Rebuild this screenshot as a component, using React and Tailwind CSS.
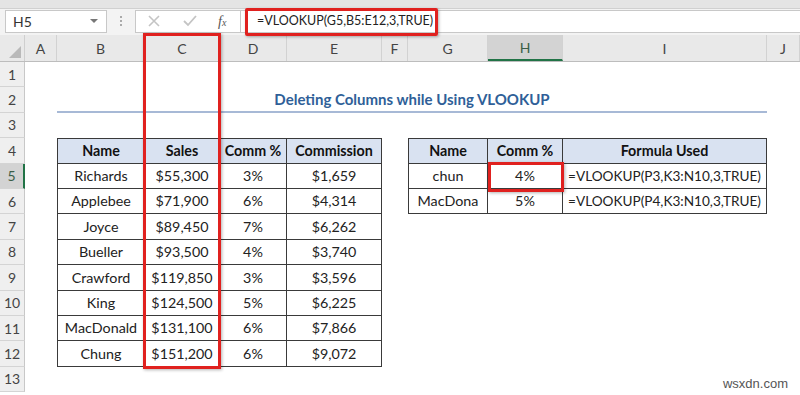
const COLS = [
  { key: "A", w: "w-[32px]" },
  { key: "B", w: "w-[88px]" },
  { key: "C", w: "w-[75px]" },
  { key: "D", w: "w-[67px]" },
  { key: "E", w: "w-[95px]" },
  { key: "F", w: "w-[26px]" },
  { key: "G", w: "w-[80px]" },
  { key: "H", w: "w-[75px]" },
  { key: "I", w: "w-[204px]" },
  { key: "J", w: "w-[33px]" },
];

const sales = [
  ["Richards", "$55,300", "3%", "$1,659"],
  ["Applebee", "$71,900", "6%", "$4,314"],
  ["Joyce", "$89,450", "7%", "$6,262"],
  ["Bueller", "$93,500", "4%", "$3,740"],
  ["Crawford", "$119,850", "3%", "$3,596"],
  ["King", "$124,500", "5%", "$6,225"],
  ["MacDonald", "$131,100", "6%", "$7,866"],
  ["Chung", "$151,200", "6%", "$9,072"],
];

const lookup = [
  ["chun", "4%", "=VLOOKUP(P3,K3:N10,3,TRUE)"],
  ["MacDona", "5%", "=VLOOKUP(P4,K3:N10,3,TRUE)"],
];

function cellContent(row, col) {
  // left table B4:E12, right table G4:I6
  const left = ["B", "C", "D", "E"];
  const right = ["G", "H", "I"];
  if (row === 4 && left.includes(col)) {
    return { text: ["Name", "Sales", "Comm %", "Commission"][left.indexOf(col)], head: true };
  }
  if (row >= 5 && row <= 12 && left.includes(col)) {
    return { text: sales[row - 5][left.indexOf(col)] };
  }
  if (row === 4 && right.includes(col)) {
    return { text: ["Name", "Comm %", "Formula Used"][right.indexOf(col)], head: true };
  }
  if ((row === 5 || row === 6) && right.includes(col)) {
    return { text: lookup[row - 5][right.indexOf(col)], small: col === "I" };
  }
  return null;
}

function Cell({ row, col, w }) {
  const c = cellContent(row, col);
  if (!c) return <div className={`${w} shrink-0`} />;
  const firstCol = col === "B" || col === "G";
  return (
    <div
      className={`${w} shrink-0 flex items-center justify-center whitespace-nowrap border-[#3a3a3a] border-b border-r ${
        row === 4 ? "border-t" : ""
      } ${firstCol ? "border-l" : ""} ${c.head ? "bg-[#d9e2f1] font-bold text-[#111]" : "text-[#222]"} ${
        c.small ? "text-[13.6px]" : ""
      }`}
    >
      {c.text}
    </div>
  );
}

export default function App() {
  const rows = Array.from({ length: 13 }, (_, i) => i + 1);

  return (
    <div
      className="relative w-[800px] h-[395px] overflow-hidden bg-white text-[14.3px] text-[#222]"
      style={{ fontFamily: "Lato, 'Open Sans', sans-serif" }}
    >
      {/* top ribbon edge */}
      <div className="h-[9px] bg-[#e4e4e4] border-b border-[#d0d0d0]" />

      {/* formula bar */}
      <div className="h-[26px] flex items-center bg-[#f3f3f3] pb-[2px]">
        <div className="ml-[5px] w-[102px] h-[23px] bg-white border border-[#c8c8c8] flex items-center justify-between pl-[7px] pr-[8px] text-[14px] text-[#333]">
          <span>H5</span>
          <span className="w-0 h-0 border-l-[4px] border-r-[4px] border-t-[4px] border-l-transparent border-r-transparent border-t-[#777]" />
        </div>
        <div className="w-[28px] flex flex-col items-center gap-[2px]">
          <span className="w-[2px] h-[2px] bg-[#aaa]" />
          <span className="w-[2px] h-[2px] bg-[#aaa]" />
          <span className="w-[2px] h-[2px] bg-[#aaa]" />
        </div>
        <div className="w-[106px] h-[23px] bg-white border border-[#c8c8c8] flex items-center">
          <svg width="14" height="14" viewBox="0 0 14 14" className="ml-[11px]">
            <path d="M2 2 L12 12 M12 2 L2 12" stroke="#c4c4c4" strokeWidth="1.6" />
          </svg>
          <svg width="16" height="14" viewBox="0 0 16 14" className="ml-[21px]">
            <path d="M2 7 L6 11 L14 2" stroke="#c4c4c4" strokeWidth="1.8" fill="none" />
          </svg>
          <span className="ml-[20px] italic text-[#555] text-[14px]" style={{ fontFamily: "'Liberation Serif', serif" }}>
            f<span className="text-[10px]">x</span>
          </span>
        </div>
        <div className="flex-1 h-[23px] bg-white border-y border-[#c8c8c8] flex items-center pl-[16px] text-[12.5px] text-[#222]">
          =VLOOKUP(G5,B5:E12,3,TRUE)
        </div>
      </div>

      {/* column headers */}
      <div className="h-[27px] flex bg-[#e9e9e9] border-b border-[#bdbdbd] text-[14px] text-[#444]">
        <div className="w-[25px] shrink-0 border-r border-[#cfcfcf] flex items-end justify-end pr-[3px] pb-[3px]">
          <span
            className="w-0 h-0"
            style={{ borderRight: "12px solid #b9b9b9", borderTop: "12px solid transparent" }}
          />
        </div>
        {COLS.map((c) => (
          <div
            key={c.key}
            className={`${c.w} shrink-0 flex items-center justify-center border-r border-[#d2d2d2] ${
              c.key === "H" ? "bg-[#d3d3d3] border-b-2 border-b-[#217346] text-[#3b5e48]" : ""
            }`}
          >
            {c.key}
          </div>
        ))}
      </div>

      {/* grid rows */}
      {rows.map((r) => (
        <div key={r} className="h-[25.4px] flex">
          <div
            className={`w-[25px] shrink-0 flex items-center justify-center text-[14px] border-b border-[#d4d4d4] ${
              r === 5
                ? "bg-[#d3d3d3] border-r-2 border-r-[#217346] text-[#3b5e48]"
                : "bg-[#efefef] border-r border-r-[#c8c8c8] text-[#444]"
            }`}
          >
            {r}
          </div>
          {r === 2 ? (
            <>
              <div className="w-[32px] shrink-0" />
              <div className="w-[710px] shrink-0 flex items-center justify-center border-b-2 border-[#a7b9d6] font-bold text-[#2f5f98] text-[15px]">
                Deleting Columns while Using VLOOKUP
              </div>
            </>
          ) : (
            COLS.map((c) => <Cell key={c.key} row={r} col={c.key} w={c.w} />)
          )}
        </div>
      ))}

      {/* red highlight boxes */}
      <div className="absolute left-[245px] top-[8px] w-[193px] h-[28px] border-[3px] border-[#e0211f] rounded-[2px] shadow-[1px_1px_3px_rgba(0,0,0,0.3)]" />
      <div className="absolute left-[143px] top-[33px] w-[78px] h-[336px] border-[3px] border-[#e0211f] shadow-[1px_1px_3px_rgba(0,0,0,0.3)]" />
      <div className="absolute left-[488px] top-[162px] w-[76px] h-[30px] border-[3px] border-[#e0211f] shadow-[1px_1px_3px_rgba(0,0,0,0.3)]" />

      {/* watermark */}
      <div className="absolute right-[12px] bottom-[2px] text-[13px] text-[#555]" style={{ fontFamily: "'Liberation Sans', sans-serif" }}>
        wsxdn.com
      </div>
    </div>
  );
}
